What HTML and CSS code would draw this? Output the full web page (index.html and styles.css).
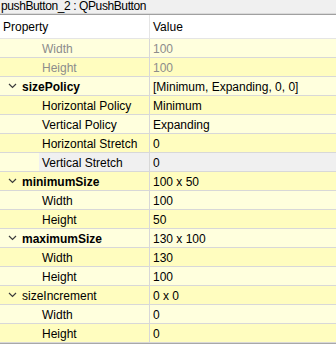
FILE: index.html
```html
<!DOCTYPE html>
<html>
<head>
<meta charset="utf-8">
<link rel="stylesheet" href="styles.css">
</head>
<body>
<div class="editor">
  <div class="title">pushButton_2 : QPushButton</div>
  <div class="header">
    <div class="c1">Property</div>
    <div class="c2">Value</div>
  </div>
  <div class="row light disabled"><div class="c1 child">Width</div><div class="c2">100</div></div>
  <div class="row dark disabled"><div class="c1 child">Height</div><div class="c2">100</div></div>
  <div class="row light"><div class="c1 top"><svg class="chev" width="9" height="6" viewBox="0 0 9 6"><polyline points="1,1 4.5,4.5 8,1" fill="none" stroke="#3c3c3c" stroke-width="1.2"/></svg><b>sizePolicy</b></div><div class="c2">[Minimum, Expanding, 0, 0]</div></div>
  <div class="row dark"><div class="c1 child">Horizontal Policy</div><div class="c2">Minimum</div></div>
  <div class="row light"><div class="c1 child">Vertical Policy</div><div class="c2">Expanding</div></div>
  <div class="row dark"><div class="c1 child">Horizontal Stretch</div><div class="c2">0</div></div>
  <div class="row light current"><div class="c1 child"><span class="sel">Vertical Stretch</span></div><div class="c2">0</div></div>
  <div class="row dark"><div class="c1 top"><svg class="chev" width="9" height="6" viewBox="0 0 9 6"><polyline points="1,1 4.5,4.5 8,1" fill="none" stroke="#3c3c3c" stroke-width="1.2"/></svg><b>minimumSize</b></div><div class="c2">100 x 50</div></div>
  <div class="row light"><div class="c1 child">Width</div><div class="c2">100</div></div>
  <div class="row dark"><div class="c1 child">Height</div><div class="c2">50</div></div>
  <div class="row light"><div class="c1 top"><svg class="chev" width="9" height="6" viewBox="0 0 9 6"><polyline points="1,1 4.5,4.5 8,1" fill="none" stroke="#3c3c3c" stroke-width="1.2"/></svg><b>maximumSize</b></div><div class="c2">130 x 100</div></div>
  <div class="row dark"><div class="c1 child">Width</div><div class="c2">130</div></div>
  <div class="row light"><div class="c1 child">Height</div><div class="c2">100</div></div>
  <div class="row dark"><div class="c1 top"><svg class="chev" width="9" height="6" viewBox="0 0 9 6"><polyline points="1,1 4.5,4.5 8,1" fill="none" stroke="#3c3c3c" stroke-width="1.2"/></svg>sizeIncrement</div><div class="c2">0 x 0</div></div>
  <div class="row light"><div class="c1 child">Width</div><div class="c2">0</div></div>
  <div class="row dark"><div class="c1 child">Height</div><div class="c2">0</div></div>
</div>
</body>
</html>
```

FILE: styles.css
```css
* { box-sizing: border-box; }
html, body {
  margin: 0;
  padding: 0;
  background: #a8a8a8;
}
body {
  font-family: "Liberation Sans", Arial, sans-serif;
  font-size: 12px;
  color: #000;
  width: 336px;
  height: 344px;
  overflow: hidden;
}
.editor {
  width: 336px;
  background: #fff;
}
.title {
  height: 15px;
  line-height: 13px;
  padding-left: 1px;
  letter-spacing: -0.4px;
  background: #f0f0f0;
  border-bottom: 1px solid #a0a0a0;
  box-shadow: inset 0 -1px 0 #dadada;
  white-space: nowrap;
}
.header {
  display: flex;
  height: 24px;
  background: #fff;
  border-bottom: 1px solid #e5e5e5;
}
.header .c1 {
  width: 150px;
  padding-left: 3px;
  padding-top: 1px;
  line-height: 23px;
  border-right: 1px solid #e5e5e5;
}
.header .c2 {
  flex: 1;
  padding-left: 3px;
  padding-top: 1px;
  line-height: 23px;
}
.row {
  display: flex;
  height: 19px;
  border-bottom: 1px solid #d8d8d8;
  white-space: nowrap;
}
.row.light { background: #ffffdd; }
.row.dark { background: #fffdbf; }
.row .c1 {
  width: 150px;
  display: flex;
  align-items: center;
  padding-top: 1px;
  border-right: 1px solid #d8d8d8;
}
.row .c2 {
  flex: 1;
  display: flex;
  align-items: center;
  padding-top: 1px;
  padding-left: 3px;
}
.row .c1.top { padding-left: 8px; }
.row .c1.child { padding-left: 42px; }
.chev { margin-right: 5px; margin-top: -1px; }
.row b { font-weight: bold; }
.disabled { color: #8c8c8c; }
.row.current .c1.child { padding-left: 39px; padding-top: 0; }
.row.current .sel {
  flex: 1;
  align-self: stretch;
  display: flex;
  align-items: center;
  padding-left: 3px;
  padding-top: 1px;
  background: #f0f0f0;
}
.row.current .c2 { background: #f0f0f0; }
```
